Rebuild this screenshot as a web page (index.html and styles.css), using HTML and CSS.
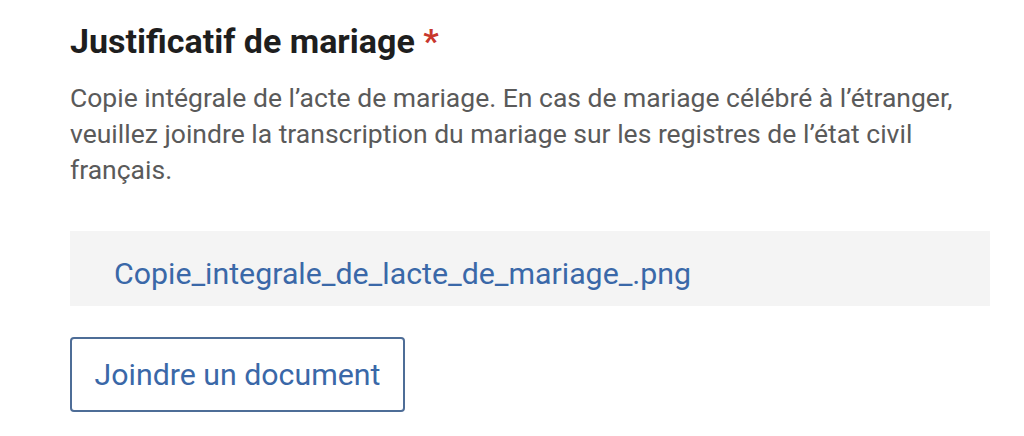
FILE: index.html
```html
<!DOCTYPE html>
<html lang="fr">
<head>
<meta charset="utf-8">
<link rel="stylesheet" href="styles.css">
</head>
<body>
<section class="field">
  <h2 class="field-title">Justificatif de mariage <span class="required">*</span></h2>
  <p class="field-hint">Copie intégrale de l’acte de mariage. En cas de mariage célébré à l’étranger, veuillez joindre la transcription du mariage sur les registres de l’état civil français.</p>
  <div class="file-list">
    <a class="file-link" href="#">Copie_integrale_de_lacte_de_mariage_.png</a>
  </div>
  <button class="attach-btn" type="button">Joindre un document</button>
</section>
</body>
</html>
```

FILE: styles.css
```css
html, body {
  margin: 0;
  padding: 0;
  background: #ffffff;
}
body {
  font-family: Roboto, "Liberation Sans", sans-serif;
}
.field {
  width: 920px;
  padding: 21px 0 0 70px;
  display: flex;
  flex-direction: column;
  align-items: flex-start;
}
.field-title {
  margin: 0;
  font-size: 34px;
  font-weight: 700;
  line-height: 40px;
  color: #1e1e1e;
}
.required {
  color: #c8372d;
}
.field-hint {
  margin: 19px 0 0 0;
  font-size: 26.5px;
  line-height: 36px;
  color: #5a5a5a;
  width: 920px;
}
.file-list {
  margin-top: 43px;
  width: 920px;
  height: 75px;
  background: #f4f4f4;
  box-sizing: border-box;
  padding: 25px 44px 0;
}
.file-link {
  display: block;
  font-size: 30.3px;
  line-height: 35px;
  color: #3a68a8;
  text-decoration: none;
}
.attach-btn {
  margin-top: 31px;
  width: 335px;
  height: 75px;
  box-sizing: border-box;
  border: 2px solid #4e6d97;
  border-radius: 4px;
  background: #fff;
  font-family: Roboto, "Liberation Sans", sans-serif;
  font-size: 30.3px;
  color: #3a68a8;
  padding: 0;
}
```
